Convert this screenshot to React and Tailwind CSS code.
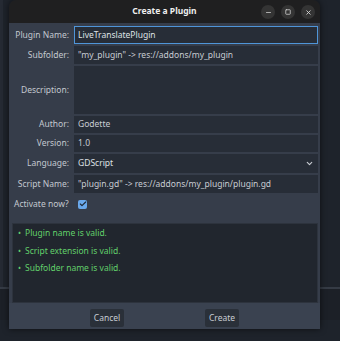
import { Check, ChevronDown, Minus, Square, X } from "lucide-react";

const rows = [
  { label: "Subfolder:", value: "\"my_plugin\" -> res://addons/my_plugin", h: "h-[18px]" },
  { label: "Description:", value: "", h: "h-[48px]" },
  { label: "Author:", value: "Godette", h: "h-[17px]" },
  { label: "Version:", value: "1.0", h: "h-[17px]" },
];

const messages = ["Plugin name is valid.", "Script extension is valid.", "Subfolder name is valid."];

function Row({ label, h, children, field = true }) {
  return (
    <div className={`flex ${h}`}>
      <div className="w-[65px] shrink-0 flex items-center justify-end pr-[5px] text-[#c3c8cf]">{label}</div>
      <div className={`flex-1 flex items-center ${field ? "bg-[#272d37] px-[4px]" : "px-[4px]"}`}>{children}</div>
    </div>
  );
}

export default function App() {
  return (
    <div
      className="relative w-[340px] h-[341px] bg-[#1e232b] overflow-hidden text-[8.5px] leading-none"
      style={{ fontFamily: "'Noto Sans', 'Open Sans', sans-serif" }}
    >
      {/* desktop behind the dialog */}
      <div className="h-[287px] border-l-[3px] border-[#252a33]" />
      <div className="h-[2px] bg-[#353b45]" />
      <div className="h-[31px] bg-[#1c2027]" />

      <div className="absolute left-[9px] top-0 w-[311px] h-[329px] flex flex-col rounded-t-[7px] overflow-hidden shadow-[0_0_6px_rgba(0,0,0,0.6)]">
        <div className="h-[23px] shrink-0 bg-[#1f1f20] relative flex items-center justify-center">
          <span className="text-[#eeeeee] font-bold text-[8.5px]">Create a Plugin</span>
          <div className="absolute right-[5px] top-[5px] flex gap-[6px]">
            <div className="w-[14px] h-[14px] rounded-full bg-[#343434] flex items-center justify-center">
              <Minus size={7} strokeWidth={2.5} color="#d8d8d8" />
            </div>
            <div className="w-[14px] h-[14px] rounded-full bg-[#343434] flex items-center justify-center">
              <Square size={6} strokeWidth={3} color="#d8d8d8" />
            </div>
            <div className="w-[14px] h-[14px] rounded-full bg-[#343434] flex items-center justify-center">
              <X size={7} strokeWidth={3} color="#d8d8d8" />
            </div>
          </div>
        </div>

        <div className="flex-1 bg-[#363d4a] flex flex-col">
          <div className="flex flex-col gap-[2px] pt-[3px] pr-[2px]">
            <Row label="Plugin Name:" h="h-[18px]">
              <div className="-mx-[4px] h-full w-[calc(100%+8px)] border border-[#4f95d8] bg-[#272d37] flex items-center px-[3px] text-[#dfe2e6]">
                LiveTranslatePlugin
              </div>
            </Row>
            {rows.map((r) => (
              <Row key={r.label} label={r.label} h={r.h}>
                <span className="text-[#c8ccd3]">{r.value}</span>
              </Row>
            ))}
            <Row label="Language:" h="h-[19px]">
              <span className="flex-1 text-[#dde0e5]">GDScript</span>
              <ChevronDown size={9} strokeWidth={3} color="#c9cdd3" />
            </Row>
            <Row label="Script Name:" h="h-[18px]">
              <span className="text-[#c8ccd3]">"plugin.gd" -&gt; res://addons/my_plugin/plugin.gd</span>
            </Row>
            <div className="flex h-[18px] items-center">
              <span className="pl-[5px] w-[65px] text-[#c3c8cf]">Activate now?</span>
              <div className="ml-[4px] w-[9px] h-[9px] rounded-[2px] bg-[#6aa9ec] flex items-center justify-center">
                <Check size={8} strokeWidth={3.5} color="#1f2a38" />
              </div>
            </div>
          </div>

          <div className="mt-[10px] ml-[3px] mr-[2px] flex-1 bg-[#21262e] border border-[#2d333d] pt-[5px] pl-[5px] flex flex-col gap-[9px] text-[#62d06b]">
            {messages.map((m) => (
              <div key={m} className="flex items-center gap-[4px]">
                <span className="w-[3px] text-[8px]">•</span>
                <span>{m}</span>
              </div>
            ))}
          </div>

          <div className="h-[26px] shrink-0 bg-[#3a4250] flex justify-evenly items-start pt-[6px]">
            <button className="w-[34px] h-[18px] bg-[#2a3039] text-[#c8ccd3] text-[8.5px] rounded-[2px]">Cancel</button>
            <button className="w-[34px] h-[18px] bg-[#2a3039] text-[#c8ccd3] text-[8.5px] rounded-[2px]">Create</button>
          </div>
        </div>
      </div>
    </div>
  );
}
